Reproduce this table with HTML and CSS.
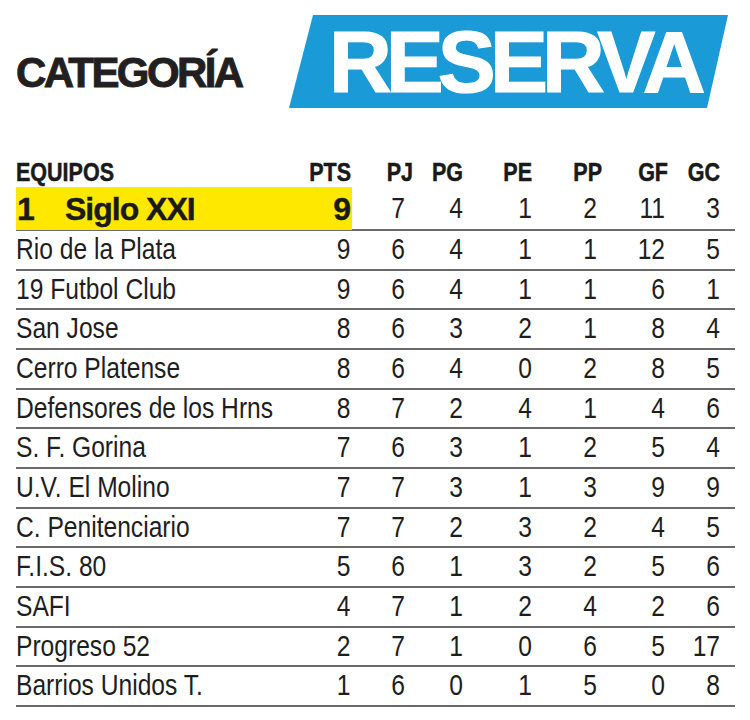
FILE: index.html
```html
<!DOCTYPE html>
<html lang="es">
<head>
<meta charset="utf-8">
<title>Categoría Reserva</title>
<link rel="stylesheet" href="styles.css">
</head>
<body>
<div class="page">
  <header class="header">
    <h1 class="title">CATEGORÍA</h1>
    <div class="banner"><span class="banner-text">RESERVA</span></div>
  </header>

  <div class="table">
    <div class="row head">
      <div class="c team">EQUIPOS</div>
      <div class="c h-pts">PTS</div>
      <div class="c h-pj">PJ</div>
      <div class="c">PG</div>
      <div class="c">PE</div>
      <div class="c h-pp">PP</div>
      <div class="c h-gf">GF</div>
      <div class="c">GC</div>
    </div>
    <div class="row leader">
      <div class="c team hl"><span class="rank">1</span>Siglo XXI</div>
      <div class="c pts hl">9</div>
      <div class="c">7</div><div class="c">4</div><div class="c">1</div><div class="c">2</div><div class="c">11</div><div class="c">3</div>
    </div>
    <div class="row"><div class="c team">Rio de la Plata</div><div class="c pts">9</div><div class="c">6</div><div class="c">4</div><div class="c">1</div><div class="c">1</div><div class="c">12</div><div class="c">5</div></div>
    <div class="row"><div class="c team">19 Futbol Club</div><div class="c pts">9</div><div class="c">6</div><div class="c">4</div><div class="c">1</div><div class="c">1</div><div class="c">6</div><div class="c">1</div></div>
    <div class="row"><div class="c team">San Jose</div><div class="c pts">8</div><div class="c">6</div><div class="c">3</div><div class="c">2</div><div class="c">1</div><div class="c">8</div><div class="c">4</div></div>
    <div class="row"><div class="c team">Cerro Platense</div><div class="c pts">8</div><div class="c">6</div><div class="c">4</div><div class="c">0</div><div class="c">2</div><div class="c">8</div><div class="c">5</div></div>
    <div class="row"><div class="c team">Defensores de los Hrns</div><div class="c pts">8</div><div class="c">7</div><div class="c">2</div><div class="c">4</div><div class="c">1</div><div class="c">4</div><div class="c">6</div></div>
    <div class="row"><div class="c team">S. F. Gorina</div><div class="c pts">7</div><div class="c">6</div><div class="c">3</div><div class="c">1</div><div class="c">2</div><div class="c">5</div><div class="c">4</div></div>
    <div class="row"><div class="c team">U.V. El Molino</div><div class="c pts">7</div><div class="c">7</div><div class="c">3</div><div class="c">1</div><div class="c">3</div><div class="c">9</div><div class="c">9</div></div>
    <div class="row"><div class="c team">C. Penitenciario</div><div class="c pts">7</div><div class="c">7</div><div class="c">2</div><div class="c">3</div><div class="c">2</div><div class="c">4</div><div class="c">5</div></div>
    <div class="row"><div class="c team">F.I.S. 80</div><div class="c pts">5</div><div class="c">6</div><div class="c">1</div><div class="c">3</div><div class="c">2</div><div class="c">5</div><div class="c">6</div></div>
    <div class="row"><div class="c team">SAFI</div><div class="c pts">4</div><div class="c">7</div><div class="c">1</div><div class="c">2</div><div class="c">4</div><div class="c">2</div><div class="c">6</div></div>
    <div class="row"><div class="c team">Progreso 52</div><div class="c pts">2</div><div class="c">7</div><div class="c">1</div><div class="c">0</div><div class="c">6</div><div class="c">5</div><div class="c">17</div></div>
    <div class="row"><div class="c team">Barrios Unidos T.</div><div class="c pts">1</div><div class="c">6</div><div class="c">0</div><div class="c">1</div><div class="c">5</div><div class="c">0</div><div class="c">8</div></div>
  </div>
</div>
</body>
</html>
```

FILE: styles.css
```css
html, body {
  margin: 0;
  padding: 0;
  background: #ffffff;
}

body {
  font-family: "Liberation Sans", Arial, sans-serif;
  color: #1e1e1e;
}

.page {
  width: 750px;
  height: 720px;
  overflow: hidden;
}

/* ---------- header ---------- */
.header {
  display: flex;
  align-items: flex-start;
  padding: 15px 0 0 16px;
  height: 93px;
}

.title {
  margin: 37px 0 0 0;
  width: 273px;
  font-family: "Liberation Sans", Arial, sans-serif;
  font-weight: 700;
  font-size: 42px;
  line-height: 42px;
  letter-spacing: -2.6px;
  color: #231f20;
  -webkit-text-stroke: 0.9px #231f20;
}

.banner {
  width: 439px;
  height: 93px;
  background: #1b9ad8;
  clip-path: polygon(24px 0, 100% 0, calc(100% - 21px) 100%, 0 100%);
  display: flex;
  align-items: flex-start;
  padding-left: 40px;
  box-sizing: border-box;
}

.banner-text {
  font-family: "Liberation Sans", Arial, sans-serif;
  font-weight: 700;
  font-size: 87px;
  line-height: 93px;
  letter-spacing: -6px;
  color: #ffffff;
  -webkit-text-stroke: 1.2px #ffffff;
}

/* ---------- table ---------- */
.table {
  margin: 51px 0 0 16px;
  width: 719px;
}

.row {
  display: grid;
  grid-template-columns: 284px 52px 53px 58px 69px 65px 68px 55px;
  padding-right: 15px;
  height: 37.67px;
  border-bottom: 2px solid #6a6a6a;
  font-size: 30px;
  line-height: 36px;
  color: #1e1e1e;
}

/* narrow (condensed) face emulated from Liberation Sans */
.c {
  text-align: right;
  white-space: nowrap;
  transform: scaleX(0.82);
  transform-origin: right center;
}

.c.team {
  text-align: left;
  transform-origin: left center;
}

.pts {
  padding-right: 2px;
}

.row.head {
  height: 26px;
  padding-bottom: 2px;
  border-bottom: none;
  font-weight: 700;
  font-size: 25px;
  line-height: 26px;
  color: #1a1a1a;
}

.row.head .c {
  transform: scaleX(0.86);
  -webkit-text-stroke: 0.5px #1a1a1a;
}

.h-pts { margin-right: 1px; }
.h-pj { margin-right: -8px; }
.h-pp { margin-right: -5px; }
.h-gf { margin-right: -3px; }

.row.leader {
  height: 42px;
  line-height: 42px;
}

.row .c.hl {
  transform: none;
  background: #ffe800;
  font-weight: 700;
  font-size: 32px;
  letter-spacing: -1px;
  color: #1a1a1a;
  padding-top: 1px;
  box-sizing: border-box;
  -webkit-text-stroke: 0.4px #1a1a1a;
}

.team.hl {
  padding-left: 1px;
}

.rank {
  display: inline-block;
  width: 48px;
}
```
